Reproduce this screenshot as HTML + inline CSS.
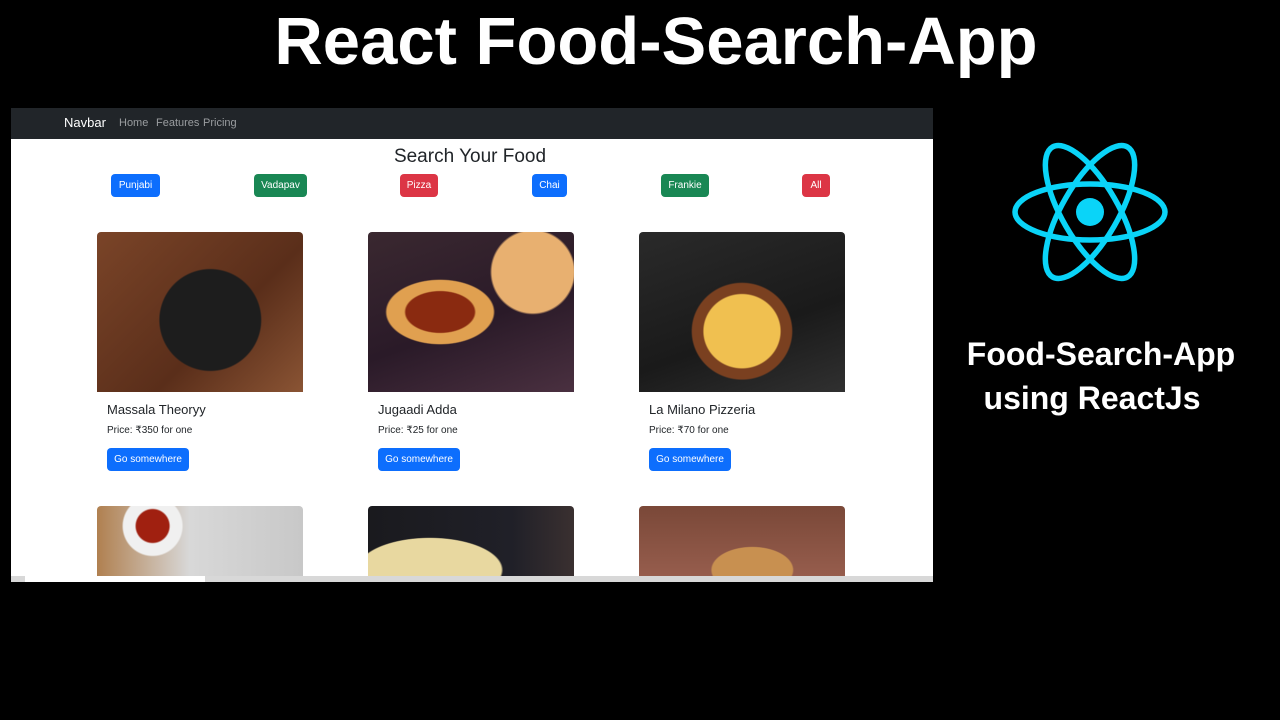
<!DOCTYPE html>
<html><head><meta charset="utf-8"><style>
*{margin:0;padding:0;box-sizing:border-box}
body{width:1280px;height:720px;background:#000;position:relative;overflow:hidden;font-family:"Liberation Sans",sans-serif}
.abs{position:absolute}
h1{position:absolute;left:0;width:1312px;text-align:center;top:3px;color:#fff;font-size:67px;font-weight:bold}
.shot{left:11px;top:108px;width:922px;height:474px;background:#fff;overflow:hidden}
.nav{left:0;top:0;width:922px;height:31px;background:#212529;color:#fff}
.btn{position:absolute;height:23px;border-radius:4px;color:#fff;font-size:10px;display:flex;align-items:center;justify-content:center}
.t{position:absolute;font-size:13px;color:#212529}
.p{position:absolute;font-size:10px;color:#212529}
.right{color:#fff;font-weight:bold;font-size:32px;text-align:center;width:330px;left:936px}
</style></head><body>
<h1>React Food-Search-App</h1>
<div class="abs shot">
 <div class="abs nav">
  <span class="abs" style="left:53px;top:7px;font-size:13px">Navbar</span>
  <span class="abs" style="left:108px;top:9px;font-size:11px;color:#9a9da0">Home</span>
  <span class="abs" style="left:145px;top:9px;font-size:11px;color:#9a9da0">Features</span>
  <span class="abs" style="left:192px;top:9px;font-size:11px;color:#9a9da0">Pricing</span>
 </div>
 <div class="abs" style="left:0;width:918px;top:38px;text-align:center;font-size:19px;color:#212529">Search Your Food</div>
 <div class="btn" style="left:100px;top:66px;width:49px;background:#0d6efd">Punjabi</div>
 <div class="btn" style="left:243px;top:66px;width:53px;background:#198754">Vadapav</div>
 <div class="btn" style="left:389px;top:66px;width:38px;background:#dc3545">Pizza</div>
 <div class="btn" style="left:521px;top:66px;width:35px;background:#0d6efd">Chai</div>
 <div class="btn" style="left:650px;top:66px;width:48px;background:#198754">Frankie</div>
 <div class="btn" style="left:791px;top:66px;width:28px;background:#dc3545">All</div>

 <div class="abs" style="left:86px;top:124px;width:206px;height:160px;border-radius:4px 4px 0 0;background:radial-gradient(circle at 55% 55%,#1d1d1d 0 35%,transparent 36%),radial-gradient(circle at 40% 50%,#e0a030 0 10%,transparent 11%),linear-gradient(135deg,#7a4428,#5a2e1a 60%,#8a5434)"></div>
 <div class="t" style="left:96px;top:294px">Massala Theoryy</div>
 <div class="p" style="left:96px;top:317px">Price: ₹350 for one</div>
 <div class="btn" style="left:96px;top:340px;width:82px;background:#0d6efd">Go somewhere</div>

 <div class="abs" style="left:357px;top:124px;width:206px;height:160px;border-radius:4px 4px 0 0;background:radial-gradient(ellipse at 35% 50%,#8a2a10 0 18%,#e0a050 19% 28%,transparent 29%),radial-gradient(circle at 80% 25%,#e8b070 0 20%,transparent 21%),linear-gradient(160deg,#3a2830,#2a1a28 55%,#4a3040)"></div>
 <div class="t" style="left:367px;top:294px">Jugaadi Adda</div>
 <div class="p" style="left:367px;top:317px">Price: ₹25 for one</div>
 <div class="btn" style="left:367px;top:340px;width:82px;background:#0d6efd">Go somewhere</div>

 <div class="abs" style="left:628px;top:124px;width:206px;height:160px;border-radius:4px 4px 0 0;background:radial-gradient(ellipse at 50% 62%,#f0c050 0 26%,#7a4020 27% 34%,transparent 35%),linear-gradient(160deg,#2a2a2a,#1a1a1a 60%,#303030)"></div>
 <div class="t" style="left:638px;top:294px">La Milano Pizzeria</div>
 <div class="p" style="left:638px;top:317px">Price: ₹70 for one</div>
 <div class="btn" style="left:638px;top:340px;width:82px;background:#0d6efd">Go somewhere</div>

 <div class="abs" style="left:86px;top:398px;width:206px;height:80px;border-radius:4px 4px 0 0;background:radial-gradient(circle at 27% 25%,#a02010 0 10%,#f0f0f0 11% 18%,transparent 19%),linear-gradient(90deg,#b08050,#d8d8d8 45%,#c8c8c8)"></div>
 <div class="abs" style="left:357px;top:398px;width:206px;height:80px;border-radius:4px 4px 0 0;background:radial-gradient(ellipse at 30% 80%,#e8d8a0 0 35%,transparent 36%),linear-gradient(90deg,#1a1a1e,#202028 70%,#3a3030)"></div>
 <div class="abs" style="left:628px;top:398px;width:206px;height:80px;border-radius:4px 4px 0 0;background:radial-gradient(ellipse at 55% 80%,#c89050 0 25%,transparent 26%),linear-gradient(180deg,#7a4838,#9a6050)"></div>
 <div class="abs" style="left:0;top:468px;width:922px;height:6px;background:#d8d8d8"></div>
 <div class="abs" style="left:14px;top:468px;width:180px;height:6px;background:#fff"></div>
</div>
<svg class="abs" style="left:1010px;top:140px" width="160" height="145" viewBox="-80 -72 160 145">
 <g fill="none" stroke="#0ad4f8" stroke-width="5.5">
  <ellipse rx="75" ry="28"/>
  <ellipse rx="75" ry="28" transform="rotate(60)"/>
  <ellipse rx="75" ry="28" transform="rotate(120)"/>
 </g>
 <circle r="14" fill="#0ad4f8"/>
</svg>
<div class="abs right" style="top:336px">Food-Search-App</div>
<div class="abs right" style="top:380px;left:927px">using ReactJs</div>
</body></html>
